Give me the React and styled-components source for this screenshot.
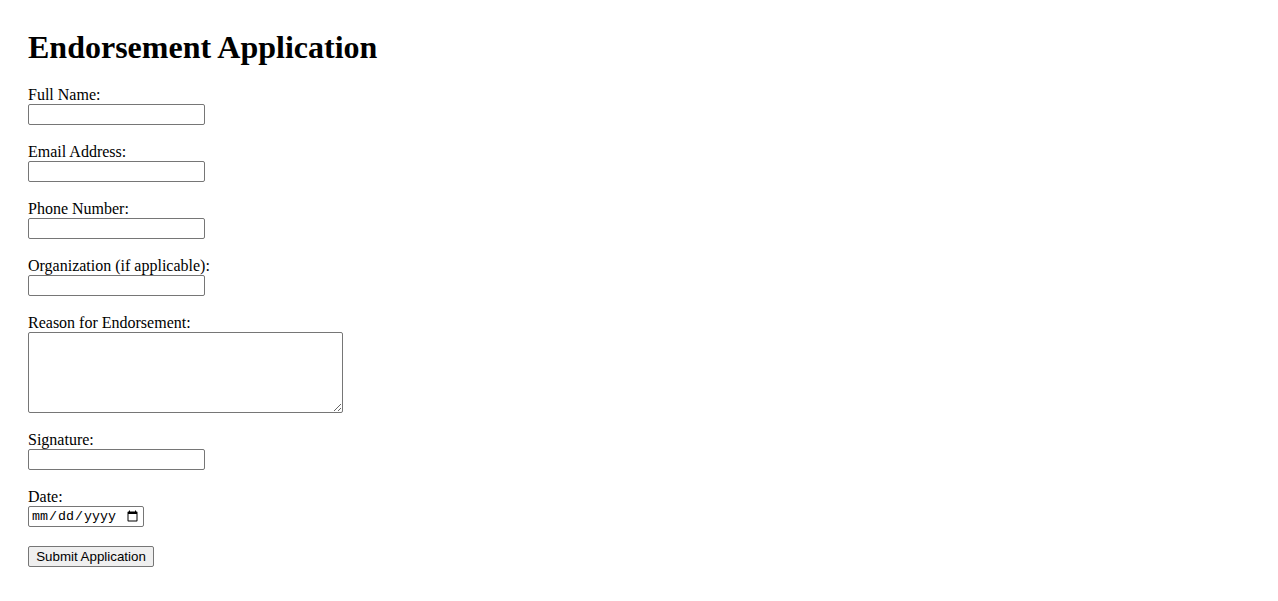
import React from "react";
import styled, { createGlobalStyle } from "styled-components";

const Global = createGlobalStyle`
  html, body { background: #ffffff; }
  body {
    margin: 8px;
    padding: 20px;
    font-family: "Liberation Serif", "Times New Roman", serif;
    font-size: 16px;
    color: #000000;
  }
`;

const Title = styled.h1`
  margin: 1px 0 21.44px 0;
  font-size: 32px;
  font-weight: bold;
  line-height: normal;
`;

const Form = styled.form`
  display: flex;
  flex-direction: column;
  align-items: flex-start;
`;

const Field = styled.div`
  display: flex;
  flex-direction: column;
  align-items: flex-start;
  margin-bottom: ${(p) => p.$gap}px;
`;

const Label = styled.label`
  display: block;
  line-height: 15px;
  height: 17px;
`;

const controlBase = `
  box-sizing: border-box;
  margin: 0;
  border: 1px solid #767676;
  border-radius: 2px;
  background: #ffffff;
  font-family: "Liberation Sans", Arial, sans-serif;
  font-size: 13.333px;
  color: #000;
  padding: 1px 2px;
`;

const TextInput = styled.input`
  ${controlBase}
  width: 177px;
  height: 21px;
`;

const DateInput = styled.input`
  ${controlBase}
  width: 116px;
  height: 21px;
  font-family: "Liberation Mono", "DejaVu Sans Mono", monospace;
  font-size: 13.333px;
  color: #000;
`;

const TextArea = styled.textarea`
  ${controlBase}
  width: 315px;
  height: 81px;
  font-family: "Liberation Mono", monospace;
  display: block;
`;

const SubmitButton = styled.button`
  box-sizing: border-box;
  height: 21px;
  width: 126px;
  padding: 1px 6px;
  border: 1px solid #767676;
  border-radius: 2px;
  background: #efefef;
  font-family: "Liberation Sans", Arial, sans-serif;
  font-size: 13.333px;
  color: #000;
  line-height: normal;
`;

const fields = [
  { id: "name", label: "Full Name:" },
  { id: "email", label: "Email Address:" },
  { id: "phone", label: "Phone Number:" },
  { id: "org", label: "Organization (if applicable):" },
];

export default function App() {
  return (
    <>
      <Global />
      <Title>Endorsement Application</Title>
      <Form onSubmit={(e) => e.preventDefault()}>
        {fields.map((f) => (
          <Field key={f.id} $gap={19}>
            <Label htmlFor={f.id}>{f.label}</Label>
            <TextInput id={f.id} type="text" />
          </Field>
        ))}
        <Field $gap={18.6}>
          <Label htmlFor="reason">Reason for Endorsement:</Label>
          <TextArea id="reason" />
        </Field>
        <Field $gap={19}>
          <Label htmlFor="sig">Signature:</Label>
          <TextInput id="sig" type="text" />
        </Field>
        <Field $gap={18.6}>
          <Label htmlFor="date">Date:</Label>
          <DateInput id="date" type="date" />
        </Field>
        <SubmitButton type="submit">Submit Application</SubmitButton>
      </Form>
    </>
  );
}
